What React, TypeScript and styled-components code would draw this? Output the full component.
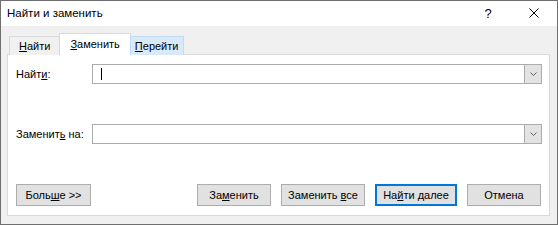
import React from 'react';
import styled, { createGlobalStyle, css } from 'styled-components';

// START: global
const GlobalStyle = createGlobalStyle`
    html, body {
        margin: 0;
        padding: 0;
        background: #ffffff;
    }
    body {
        font-family: "Liberation Sans", Arial, sans-serif;
        font-size: 11px;
        color: #000000;
    }
    * {
        box-sizing: border-box;
    }
`;

// START: data
const tabs = [
    { key: 'find', hot: 'Н', rest: 'айти' },
    { key: 'replace', hot: 'З', rest: 'аменить' },
    { key: 'goto', hot: 'П', rest: 'ерейти' },
];

const actions = [
    { key: 'replace', before: 'За', hot: 'м', after: 'енить', width: 74 },
    { key: 'replaceAll', before: 'Заменить ', hot: 'в', after: 'се', width: 84 },
    { key: 'findNext', before: 'На', hot: 'й', after: 'ти далее', width: 82, primary: true },
    { key: 'cancel', before: 'Отмена', hot: '', after: '', width: 74 },
];

// START: dialog
const App = () => {
    return (
        <>
            <GlobalStyle />
            <Window>
                <TitleBar>
                    <Title>Найти и заменить</Title>
                    <CaptionButton aria-label="Справка">?</CaptionButton>
                    <CaptionButton aria-label="Закрыть">
                        <svg width="10" height="10" viewBox="0 0 10 10">
                            <path d="M0.5 0.5 L9.5 9.5 M9.5 0.5 L0.5 9.5" stroke="#000" strokeWidth="1" fill="none" />
                        </svg>
                    </CaptionButton>
                </TitleBar>
                <Body>
                    <TabStrip>
                        {tabs.map((t) => (
                            <Tab key={t.key} $state={t.key === 'replace' ? 'active' : t.key === 'goto' ? 'hover' : 'idle'}>
                                <span><u>{t.hot}</u>{t.rest}</span>
                            </Tab>
                        ))}
                    </TabStrip>
                    <Panel>
                        <FieldRow>
                            <Label>Найт<u>и</u>:</Label>
                            <Combo>
                                <ComboText>
                                    <Caret />
                                </ComboText>
                                <DropButton>
                                    <Chevron />
                                </DropButton>
                            </Combo>
                        </FieldRow>
                        <FieldRow>
                            <Label>Заменит<u>ь</u> на:</Label>
                            <Combo>
                                <ComboText />
                                <DropButton>
                                    <Chevron />
                                </DropButton>
                            </Combo>
                        </FieldRow>
                        <ButtonRow>
                            <PushButton $width={75}>
                                <span>Боль<u>ш</u>е &gt;&gt;</span>
                            </PushButton>
                            <ActionGroup>
                                {actions.map((a) => (
                                    <PushButton key={a.key} $width={a.width} $primary={a.primary}>
                                        <span>
                                            {a.before}
                                            {a.hot && <u>{a.hot}</u>}
                                            {a.after}
                                        </span>
                                    </PushButton>
                                ))}
                            </ActionGroup>
                        </ButtonRow>
                    </Panel>
                </Body>
            </Window>
        </>
    );
};
export default App;

const Chevron = () => (
    <svg width="7" height="4" viewBox="0 0 7 4">
        <path d="M0.5 0.5 L3.5 3.5 L6.5 0.5" stroke="#606060" strokeWidth="1" fill="none" />
    </svg>
);

// START: styling
const Window = styled.div`
    width: 558px;
    height: 225px;
    border: 1px solid #6f6f6f;
    display: flex;
    flex-direction: column;
    background: #f0f0f0;
`;

const TitleBar = styled.div`
    height: 25px;
    background: #ffffff;
    display: flex;
    align-items: center;
    padding-left: 6px;
`;

const Title = styled.div`
    flex: 1;
    font-size: 11.5px;
    padding-bottom: 1px;
`;

const CaptionButton = styled.div`
    width: 46px;
    height: 25px;
    display: flex;
    align-items: center;
    justify-content: center;
    font-size: 13px;
    padding-bottom: 1px;
`;

const Body = styled.div`
    flex: 1;
    display: flex;
    flex-direction: column;
    padding: 7px 7px 8px 6px;
`;

const TabStrip = styled.div`
    display: flex;
    align-items: flex-end;
    height: 22px;
    padding-left: 2px;
    margin-bottom: -1px;
    position: relative;
    z-index: 1;
`;

const tabLooks = {
    idle: css`
        height: 19px;
        background: #f0f0f0;
        border-color: #d9d9d9;
        padding: 0 9px 0 9px;
    `,
    hover: css`
        height: 19px;
        background: #d8eaf9;
        border-color: #c0dcf3;
        padding: 0 5px 0 4px;
    `,
    active: css`
        height: 22px;
        background: #ffffff;
        border-color: #d9d9d9;
        border-bottom-color: #ffffff;
        padding: 0 10px 2px 10px;
    `,
};

const Tab = styled.div<{ $state: 'idle' | 'hover' | 'active' }>`
    display: flex;
    align-items: center;
    border: 1px solid;
    border-bottom: 0;
    margin-left: -1px;
    padding-top: 1px;
    ${(p) => tabLooks[p.$state]}

    &:first-child {
        margin-left: 0;
    }
`;

const Panel = styled.div`
    flex: 1;
    background: #ffffff;
    border: 1px solid #d9d9d9;
    display: flex;
    flex-direction: column;
    gap: 40px;
    padding: 9px 7px 8px 8px;
`;

const FieldRow = styled.div`
    display: grid;
    grid-template-columns: 76px 1fr;
    align-items: center;
    height: 20px;
`;

const Label = styled.div`
    padding-bottom: 1px;
`;

const Combo = styled.div`
    height: 20px;
    border: 1px solid #acacac;
    display: flex;
    background: #ffffff;
`;

const ComboText = styled.div`
    flex: 1;
    display: flex;
    align-items: center;
    padding-left: 8px;
`;

const Caret = styled.div`
    width: 1px;
    height: 12px;
    background: #000000;
`;

const DropButton = styled.div`
    width: 17px;
    background: #e3e3e3;
    border-left: 1px solid #acacac;
    display: flex;
    align-items: center;
    justify-content: center;
`;

const ButtonRow = styled.div`
    display: flex;
    justify-content: space-between;
    align-items: center;
    padding-right: 1px;
`;

const ActionGroup = styled.div`
    display: flex;
    gap: 10px;
`;

const PushButton = styled.div<{ $width: number; $primary?: boolean }>`
    width: ${(p) => p.$width}px;
    height: 22px;
    background: #e1e1e1;
    border: 1px solid #adadad;
    display: flex;
    align-items: center;
    justify-content: center;
    white-space: pre;
    padding-bottom: 1px;

    ${(p) =>
        p.$primary &&
        css`
            border: 2px solid #0078d7;
        `}
`;
